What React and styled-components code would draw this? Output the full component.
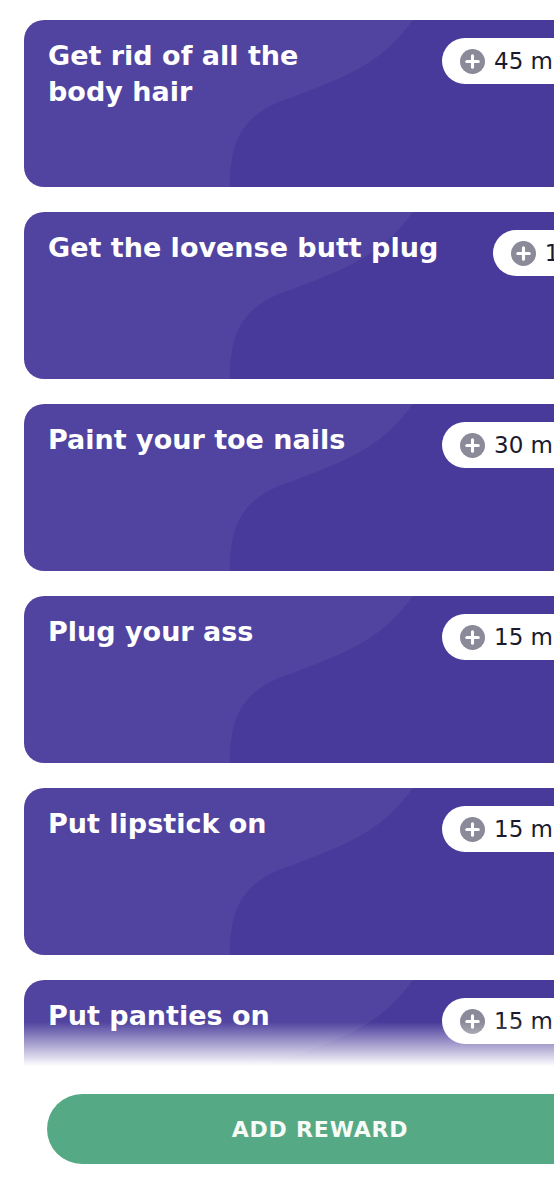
import React from "react";
import styled, { createGlobalStyle } from "styled-components";

const rewards = [
  { title: "Get rid of all the\nbody hair", time: "45 min" },
  { title: "Get the lovense butt plug", time: "1h" },
  { title: "Paint your toe nails", time: "30 min" },
  { title: "Plug your ass", time: "15 min" },
  { title: "Put lipstick on", time: "15 min" },
  { title: "Put panties on", time: "15 min" },
];

const GlobalStyle = createGlobalStyle`
  body {
    margin: 0;
    background: #ffffff;
    overflow: hidden;
    font-family: "DejaVu Sans", "Noto Sans", sans-serif;
  }
`;

const Screen = styled.div`
  width: 640px;
  height: 1200px;
  display: flex;
  flex-direction: column;
  background: #ffffff;
`;

const ListArea = styled.div`
  position: relative;
  height: 1070px;
  overflow: hidden;
  flex: none;
`;

const List = styled.div`
  display: flex;
  flex-direction: column;
  gap: 25px;
  padding: 20px 24px 0;
`;

const Fade = styled.div`
  position: absolute;
  left: 0;
  right: 0;
  bottom: 0;
  height: 48px;
  background: linear-gradient(rgba(255, 255, 255, 0), #ffffff 92%);
  pointer-events: none;
`;

const Card = styled.div`
  position: relative;
  height: 167px;
  border-radius: 20px;
  overflow: hidden;
  background: #5144a0;
  flex: none;
`;

const Wave = styled.svg`
  position: absolute;
  inset: 0;
  width: 100%;
  height: 100%;
`;

const CardBody = styled.div`
  position: relative;
  display: flex;
  align-items: flex-start;
  justify-content: space-between;
  padding: 18px 24px 0 24px;
`;

const Title = styled.h3`
  margin: 0;
  max-width: 396px;
  color: #ffffff;
  font-size: 27px;
  line-height: 36px;
  font-weight: 700;
  white-space: pre-line;
`;

const Pill = styled.div`
  display: flex;
  align-items: center;
  gap: 9px;
  height: 46px;
  padding: 0 18px;
  border-radius: 23px;
  background: #ffffff;
  flex: none;
`;

const PlusIcon = styled.svg`
  width: 25px;
  height: 25px;
  flex: none;
`;

const Time = styled.span`
  color: #1b1a2c;
  font-size: 23px;
  font-weight: 400;
`;

const Footer = styled.div`
  padding: 24px 47px 0;
`;

const AddButton = styled.button`
  width: 100%;
  height: 70px;
  border: none;
  border-radius: 35px;
  background: #55aa85;
  color: #f6fbf8;
  font-family: "DejaVu Sans", "Noto Sans", sans-serif;
  font-size: 22px;
  font-weight: 700;
  letter-spacing: 0.8px;
`;

const Plus = () => (
  <PlusIcon viewBox="0 0 24 24">
    <circle cx="12" cy="12" r="12" fill="#8a8a99" />
    <path d="M12 6.5v11M6.5 12h11" stroke="#ffffff" strokeWidth="3" strokeLinecap="round" />
  </PlusIcon>
);

const RewardCard = ({ title, time }) => (
  <Card>
    <Wave viewBox="0 0 592 167" preserveAspectRatio="none">
      <path
        d="M389 0 C360 40 330 55 260 80 C215 97 206 125 206 167 L592 167 L592 0 Z"
        fill="#483a9a"
      />
    </Wave>
    <CardBody>
      <Title>{title}</Title>
      <Pill>
        <Plus />
        <Time>{time}</Time>
      </Pill>
    </CardBody>
  </Card>
);

export default function App() {
  return (
    <Screen>
      <GlobalStyle />
      <ListArea>
        <List>
          {rewards.map((r) => (
            <RewardCard key={r.title} {...r} />
          ))}
        </List>
        <Fade />
      </ListArea>
      <Footer>
        <AddButton>ADD REWARD</AddButton>
      </Footer>
    </Screen>
  );
}
